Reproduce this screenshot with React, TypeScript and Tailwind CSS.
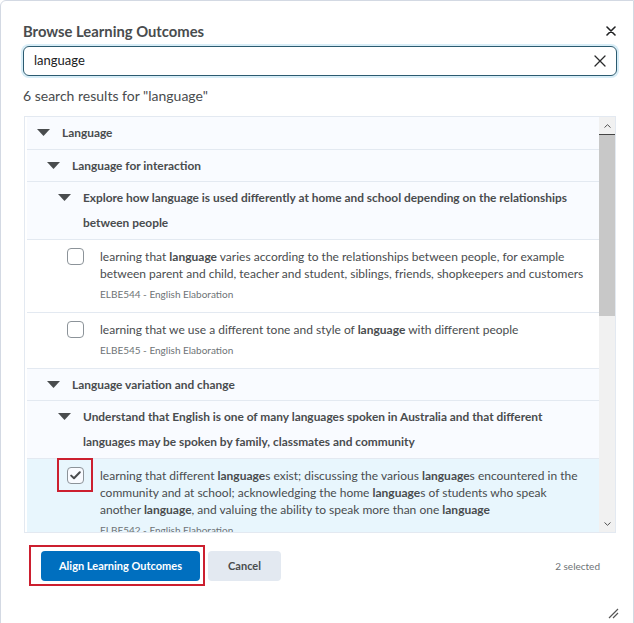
import React from 'react';

function Caret() {
  return (
    <svg width="13" height="7" viewBox="0 0 13 7" className="shrink-0">
      <path d="M0 0h13L6.5 7z" fill="#494c4e" />
    </svg>
  );
}

function Check({ checked }: { checked?: boolean }) {
  return (
    <span
      className={
        'flex h-[17px] w-[17px] shrink-0 items-center justify-center rounded-[4px] border border-[#8c9399] ' +
        (checked ? 'bg-[#f9fbff]' : 'bg-white')
      }
    >
      {checked && (
        <svg width="11" height="9" viewBox="0 0 11 9">
          <path d="M1.2 4.6 4 7.3 9.8 1.3" fill="none" stroke="#494c4e" strokeWidth="2" strokeLinecap="round" strokeLinejoin="round" />
        </svg>
      )}
    </span>
  );
}

function Group({ pad, children }: { pad: string; children: React.ReactNode }) {
  return (
    <div className={'flex items-start border-b border-[#e3e9f1] bg-[#f9fbff] py-[3.25px] pr-[12px] ' + pad}>
      <span className="flex h-[25px] items-center">
        <Caret />
      </span>
      <span className="ml-[12px] text-[11.9px] font-bold leading-[25px] text-[#494c4e]">{children}</span>
    </div>
  );
}

function Item({
  children,
  code,
  checked,
  selected,
}: {
  children: React.ReactNode;
  code: string;
  checked?: boolean;
  selected?: boolean;
}) {
  return (
    <div
      className={
        'flex items-start border-b border-[#e3e9f1] pb-[10px] pl-[40px] pr-[14px] pt-[8px] ' +
        (selected ? 'bg-[#e8f6fd]' : 'bg-white')
      }
    >
      <span className="relative">
        <Check checked={checked} />
        {selected && (
          <span className="absolute -left-[10px] -top-[9px] h-[34px] w-[36px] border-2 border-[#cc1f2f]" />
        )}
      </span>
      <div className="ml-[16px]">
        <p className="text-[12px] leading-[17px] text-[#494c4e]">{children}</p>
        <p className="mt-[4px] text-[10px] leading-[16px] text-[#6e7376]">{code}</p>
      </div>
    </div>
  );
}

function ScrollBar() {
  return (
    <div className="flex w-[16px] shrink-0 flex-col bg-[#f1f1f1]">
      <div className="flex h-[17px] items-center justify-center">
        <svg width="7" height="4" viewBox="0 0 7 4">
          <path d="M0.5 3.5 3.5 0.7 6.5 3.5" fill="none" stroke="#505050" strokeWidth="1" />
        </svg>
      </div>
      <div className="h-px bg-[#444]" />
      <div className="h-[181px] bg-[#c8c8c8]" />
      <div className="flex-1" />
      <div className="flex h-[17px] items-center justify-center">
        <svg width="7" height="4" viewBox="0 0 7 4">
          <path d="M0.5 0.5 3.5 3.3 6.5 0.5" fill="none" stroke="#505050" strokeWidth="1" />
        </svg>
      </div>
    </div>
  );
}

export default function App() {
  return (
    <div className="h-[623px] w-[634px] overflow-hidden bg-white font-['Lato','Noto_Sans',sans-serif] text-[#494c4e]">
      <div className="relative flex h-[640px] flex-col rounded-tl-[6px] border border-[#d3d9e3] pl-[22px] pr-[16px]">
        <div className="mt-[20px] flex h-[20px] items-center justify-between">
          <h1 className="text-[14.8px] font-bold leading-[20px] text-[#494c4e]">Browse Learning Outcomes</h1>
          <svg width="10" height="10" viewBox="0 0 10 10" className="mr-[1px]">
            <path d="M1 1l8 8M9 1l-8 8" stroke="#202122" strokeWidth="1.6" strokeLinecap="round" />
          </svg>
        </div>

        <div className="mt-[5px] flex h-[30px] items-center rounded-[6px] border border-[#2b5b70] pl-[10px] pr-[10px] shadow-[0_0_0_2px_#d7edf7]">
          <span className="flex-1 text-[13px] text-[#202122]">language</span>
          <svg width="12" height="12" viewBox="0 0 12 12">
            <path d="M1 1l10 10M11 1L1 11" stroke="#2a2b2c" strokeWidth="1.3" strokeLinecap="round" />
          </svg>
        </div>

        <p className="mt-[10px] text-[14px] leading-[20px] text-[#494c4e]">6 search results for "language"</p>

        <div className="mx-[1px] mt-[10px] flex h-[417px] overflow-hidden border border-[#e3e9f1]">
          <div className="flex-1 overflow-hidden pl-[2px]">
            <Group pad="pl-[10px]">Language</Group>
            <Group pad="pl-[20px]">Language for interaction</Group>
            <Group pad="pl-[31px]">
              Explore how language is used differently at home and school depending on the relationships between people
            </Group>
            <Item code="ELBE544 - English Elaboration">
              learning that <b>language</b> varies according to the relationships between people, for example between
              parent and child, teacher and student, siblings, friends, shopkeepers and customers
            </Item>
            <Item code="ELBE545 - English Elaboration">
              learning that we use a different tone and style of <b>language</b> with different people
            </Item>
            <Group pad="pl-[20px]">Language variation and change</Group>
            <Group pad="pl-[31px]">
              Understand that English is one of many languages spoken in Australia and that different languages may be
              spoken by family, classmates and community
            </Group>
            <Item code="ELBE542 - English Elaboration" checked selected>
              learning that different <b>language</b>s exist; discussing the various <b>language</b>s encountered in the
              community and at school; acknowledging the home <b>language</b>s of students who speak another{' '}
              <b>language</b>, and valuing the ability to speak more than one <b>language</b>
            </Item>
          </div>
          <ScrollBar />
        </div>

        <div className="mt-[18px] flex items-center pl-[18px]">
          <div className="relative">
            <button className="h-[30px] w-[159px] rounded-[4px] bg-[#006fbf] text-[11px] font-bold text-white">
              Align Learning Outcomes
            </button>
            <span className="absolute -bottom-[5px] -left-[12px] -right-[5px] -top-[6px] border-2 border-[#cc1f2f]" />
          </div>
          <button className="ml-[8px] h-[30px] w-[73px] rounded-[4px] bg-[#e3e9f1] text-[11px] font-bold text-[#494c4e]">
            Cancel
          </button>
          <span className="ml-auto mr-[17px] text-[10px] text-[#6e7376]">2 selected</span>
        </div>

        <svg width="12" height="12" viewBox="0 0 12 12" className="absolute left-[606px] top-[606px]">
          <path d="M11 2 2 11M11 6 6 11" stroke="#555" strokeWidth="1.2" />
        </svg>
      </div>
    </div>
  );
}
